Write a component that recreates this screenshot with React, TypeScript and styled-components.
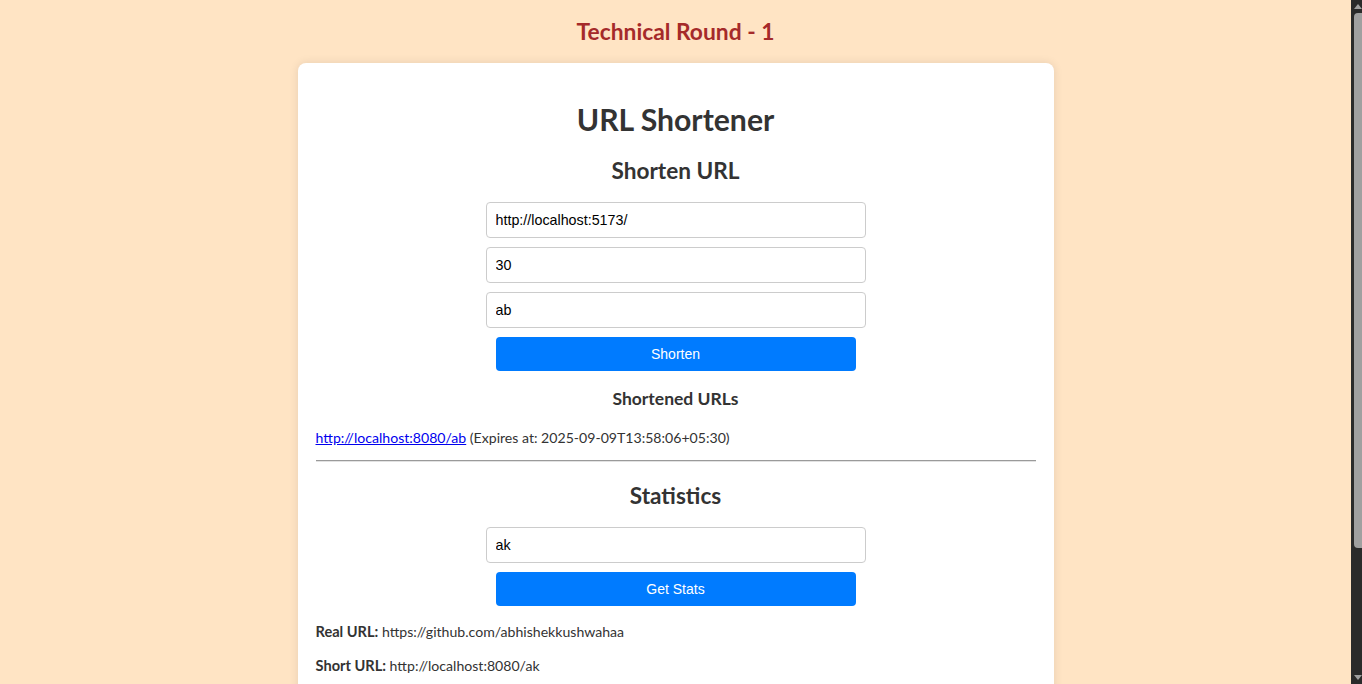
import React from "react";
import styled, { createGlobalStyle } from "styled-components";

const GlobalStyle = createGlobalStyle`
  html, body {
    margin: 0;
    padding: 0;
    background: #ffe4c4;
  }
  body {
    font-family: Lato, "Open Sans", sans-serif;
    color: #333;
  }
`;

const Page = styled.div`
  display: flex;
  flex-direction: column;
  align-items: center;
  padding: 15px 11px 40px 0;
`;

const ScrollTrack = styled.div`
  position: fixed;
  top: 0;
  right: 0;
  width: 11px;
  height: 100vh;
  background: #2b2b2b;
`;

const ScrollThumb = styled.div`
  position: absolute;
  top: 13px;
  left: 3px;
  right: 0;
  height: 535px;
  background: #a0a0a0;
  border-radius: 4px 0 0 4px;
`;

const ScrollArrow = styled.svg<{ $bottom?: boolean }>`
  position: absolute;
  left: 3px;
  ${(p) => (p.$bottom ? "bottom: 3px;" : "top: 3px;")}
`;

const PageTitle = styled.h2`
  margin: 0;
  font-size: 22.8px;
  line-height: 32px;
  font-weight: 700;
  color: #a52a2a;
`;

const Card = styled.div`
  box-sizing: border-box;
  width: 756px;
  margin-top: 16px;
  padding: 18px;
  background: #fff;
  border-radius: 8px;
  box-shadow: 0 0 10px rgba(0, 0, 0, 0.1);
  display: flex;
  flex-direction: column;
  align-items: center;
`;

const Heading = styled.h1`
  margin: 18px 0 0;
  font-size: 30.2px;
  line-height: 40px;
  font-weight: 700;
  color: #333;
`;

const SectionTitle = styled.h2<{ $top: number }>`
  margin: ${(p) => p.$top}px 0 0;
  font-size: 22.6px;
  line-height: 32px;
  font-weight: 700;
  color: #333;
`;

const SubTitle = styled.h3`
  margin: 16px 0 0;
  font-size: 17.5px;
  line-height: 24px;
  font-weight: 700;
  color: #333;
`;

const Form = styled.div`
  margin-top: 15px;
  display: flex;
  flex-direction: column;
  align-items: center;
  gap: 9px;
`;

const Input = styled.input`
  box-sizing: border-box;
  width: 380px;
  height: 36px;
  padding: 0 9px;
  border: 1px solid #ccc;
  border-radius: 4px;
  font-family: "Liberation Sans", Arial, sans-serif;
  font-size: 14.3px;
  color: #000;
  background: #fff;
  outline: none;
`;

const Button = styled.button`
  box-sizing: border-box;
  width: 360px;
  height: 34px;
  border: none;
  border-radius: 4px;
  background: #007bff;
  color: #fff;
  font-family: "Liberation Sans", Arial, sans-serif;
  font-size: 14px;
  cursor: pointer;
`;

const Line = styled.p<{ $top: number }>`
  align-self: stretch;
  margin: ${(p) => p.$top}px 0 0;
  font-size: 14.1px;
  line-height: 20px;
  text-align: left;
  color: #333;
`;

const Link = styled.a`
  color: #0000ee;
  text-decoration: underline;
`;

const Label = styled.strong`
  font-weight: 700;
  font-size: 14.6px;
`;

const Divider = styled.hr`
  align-self: stretch;
  margin: 12px 0 0;
  height: 0;
  border: none;
  border-top: 1px solid #9a9a9a;
  border-bottom: 1px solid #e2e2e2;
`;

export default function App() {
  return (
    <>
      <GlobalStyle />
      <Page>
        <PageTitle>Technical Round - 1</PageTitle>
        <Card>
          <Heading>URL Shortener</Heading>
          <SectionTitle $top={16}>Shorten URL</SectionTitle>
          <Form>
            <Input defaultValue="http://localhost:5173/" />
            <Input defaultValue="30" />
            <Input defaultValue="ab" />
            <Button>Shorten</Button>
          </Form>
          <SubTitle>Shortened URLs</SubTitle>
          <Line $top={17}>
            <Link href="#">http://localhost:8080/ab</Link> (Expires at:
            2025-09-09T13:58:06+05:30)
          </Line>
          <Divider />
          <SectionTitle $top={18}>Statistics</SectionTitle>
          <Form>
            <Input defaultValue="ak" />
            <Button>Get Stats</Button>
          </Form>
          <Line $top={16}>
            <Label>Real URL:</Label> https://github.com/abhishekkushwahaa
          </Line>
          <Line $top={14}>
            <Label>Short URL:</Label> http://localhost:8080/ak
          </Line>
          <Line $top={14}>
            <Label>Created At:</Label> 2025-09-09T13:28:06+05:30
          </Line>
          <Line $top={14}>
            <Label>Expires At:</Label> 2025-09-09T13:58:06+05:30
          </Line>
          <Line $top={14}>
            <Label>Total Clicks:</Label> 0
          </Line>
        </Card>
      </Page>
      <ScrollTrack>
        <ScrollArrow width="8" height="6" viewBox="0 0 8 6">
          <path d="M0 6 L4 1 L8 6 Z" fill="#a0a0a0" />
        </ScrollArrow>
        <ScrollThumb />
        <ScrollArrow $bottom width="8" height="6" viewBox="0 0 8 6">
          <path d="M0 0 L4 5 L8 0 Z" fill="#a0a0a0" />
        </ScrollArrow>
      </ScrollTrack>
    </>
  );
}
